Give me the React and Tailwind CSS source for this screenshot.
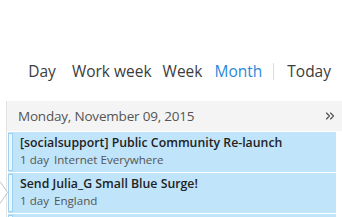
import React from 'react';
import { ChevronsRight } from 'lucide-react';

const events = [
  { title: '[socialsupport] Public Community Re-launch', dur: '1 day', place: 'Internet Everywhere' },
  { title: 'Send Julia_G Small Blue Surge!', dur: '1 day', place: 'England' },
];

const App = () => {
  return (
    <div className="relative w-[342px] h-[217px] overflow-hidden bg-white text-[#333]" style={{ fontFamily: '"Open Sans", "Noto Sans", sans-serif' }}>
      {/* view switcher */}
      <div className="h-[101px] flex items-end justify-end pr-[11px] pb-[19px]">
        <div className="flex items-center text-[15.5px] leading-[22px] text-[#3c3c3c]">
          <span className="mr-[16px]">Day</span>
          <span className="mr-[11px]">Work week</span>
          <span className="mr-[12px]">Week</span>
          <span className="mr-[11px] text-[#2b88d8]">Month</span>
          <span className="w-px h-[17px] bg-[#dcdcdc] mr-[13px]" />
          <span>Today</span>
        </div>
      </div>

      <div className="flex">
        <div className="w-[7px] shrink-0 border-r border-[#e3e3e3]" />
        <div className="flex-1">
          {/* day header */}
          <div className="h-[30px] bg-[#f4f4f4] flex items-center justify-between pl-[11px] pr-[5px]">
            <span className="text-[13.5px] tracking-[-0.2px] text-[#555]">Monday, November 09, 2015</span>
            <ChevronsRight className="w-[14px] h-[14px] text-[#555]" strokeWidth={2.25} />
          </div>

          <div className="flex flex-col gap-px pt-px pl-px pr-[6px]">
            {events.map(e => (
              <div key={e.title} className="h-[40px] bg-[#c0e4fa] flex">
                <div className="w-[5px] my-px border border-[#9fd0ef] bg-[#eaf6fe]" />
                <div className="pl-[7px] pt-[2px] flex flex-col">
                  <span className="text-[12.3px] leading-[17px] font-semibold text-[#222]">{e.title}</span>
                  <span className="text-[11.6px] leading-[17px] text-[#555]">
                    {e.dur}<span className="ml-[5px]">{e.place}</span>
                  </span>
                </div>
              </div>
            ))}
            <div className="h-[40px] bg-[#c0e4fa] flex">
              <div className="w-[5px] my-px border border-[#9fd0ef] bg-[#eaf6fe]" />
            </div>
          </div>
        </div>
      </div>

      {/* selection pointer */}
      <svg className="absolute left-0 top-[181px]" width="9" height="24" viewBox="0 0 9 24">
        <polygon points="0,0.5 7.5,11.5 0,22.5" fill="#fff" />
        <polyline points="0,0.5 7.5,11.5 0,22.5" fill="none" stroke="#c2c2c2" strokeWidth="1" />
      </svg>
    </div>
  );
};

export default App;
